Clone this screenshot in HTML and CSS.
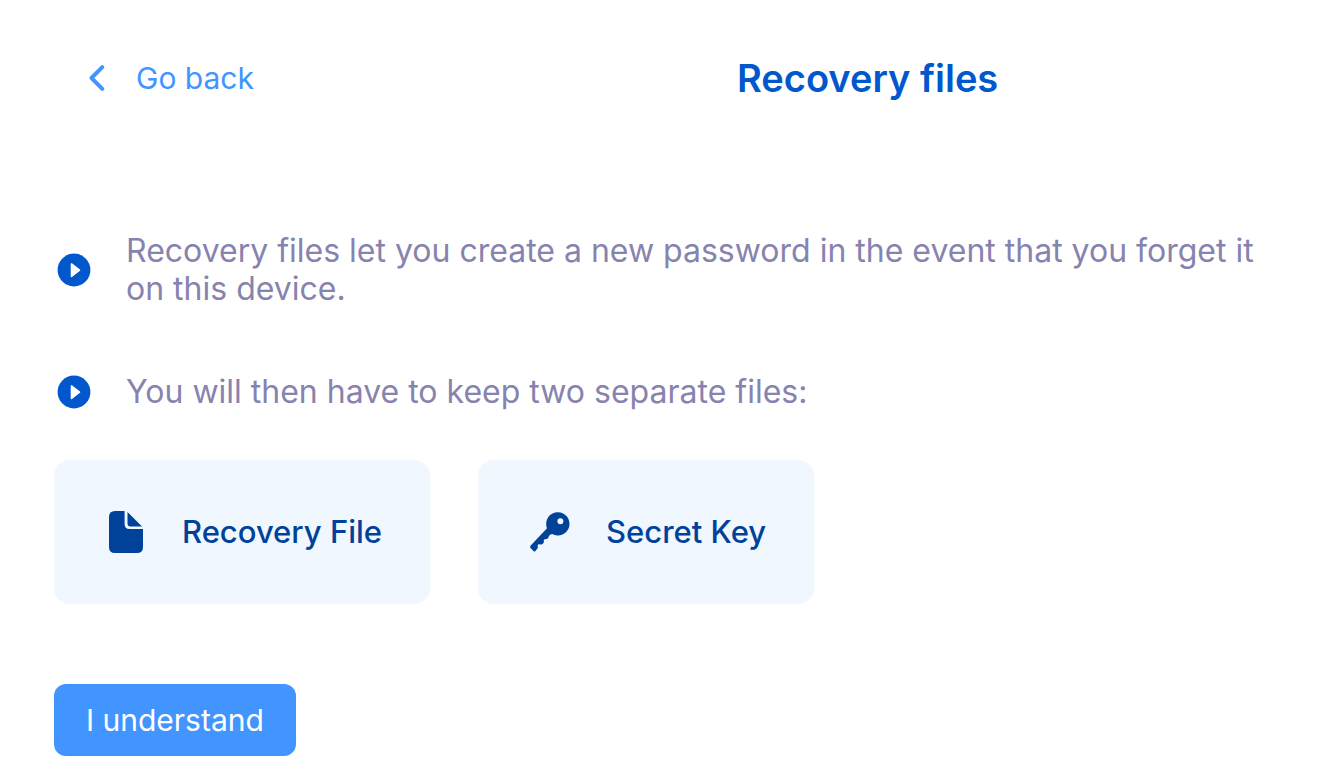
FILE: index.html
```html
<!DOCTYPE html>
<html lang="en">
<head>
<meta charset="utf-8">
<meta name="viewport" content="width=device-width, initial-scale=1">
<title>Recovery files</title>
<link rel="stylesheet" href="styles.css">
</head>
<body>
<main class="page">
  <header class="header">
    <button class="back" type="button">
      <svg class="back-icon" viewBox="0 0 18 28" aria-hidden="true"><path d="M14.300 3.200 3.500 14l10.800 10.800" fill="none" stroke="currentColor" stroke-width="4" stroke-linecap="round" stroke-linejoin="round"/></svg>
      <span>Go back</span>
    </button>
    <h1 class="title">Recovery files</h1>
  </header>
  <ul class="points">
    <li class="point">
      <svg class="point-icon" viewBox="0 0 40 40" aria-hidden="true"><circle cx="20" cy="20" r="16.4" fill="#0058cc"/><path d="M17.500 14v12.400l8-6.200z" fill="#fff" stroke="#fff" stroke-width="1.6" stroke-linejoin="round"/></svg>
      <p class="point-text">Recovery files let you create a new password in the event that you forget it on this device.</p>
    </li>
    <li class="point">
      <svg class="point-icon" viewBox="0 0 40 40" aria-hidden="true"><circle cx="20" cy="20" r="16.4" fill="#0058cc"/><path d="M17.500 14v12.400l8-6.200z" fill="#fff" stroke="#fff" stroke-width="1.6" stroke-linejoin="round"/></svg>
      <p class="point-text">You will then have to keep two separate files:</p>
    </li>
  </ul>
  <div class="cards">
    <div class="card">
      <svg class="card-icon" viewBox="0 0 48 48" aria-hidden="true"><path fill="currentColor" d="M13 3h9.600v13q0 5 5 5h13.400v18q0 6-6 6H13q-6 0-6-6V9q0-6 6-6z"/><path fill="currentColor" d="M25.500 4 40 18.400H28q-2.500 0-2.500-2.400z"/></svg>
      <span>Recovery File</span>
    </div>
    <div class="card">
      <svg class="card-icon" viewBox="0 0 48 48" aria-hidden="true"><path fill="currentColor" fill-rule="evenodd" d="M32 4.300a11.600 11.600 0 1 1-5.800 21.700q-2.600 0-3.500 2.600-.2 2-1.700 2.400-2.600-.4-3.200 1.300.6 2.200-.8 3.300-1 1.200-2.400.8-2.700-.5-3.100 1.100.8 1.500.2 2.500l-2 2.800q-1 1.300-2.200.2l-3-3q-1-1 0-2.300L21 20.300A11.600 11.600 0 0 1 32 4.300zm2.400 6a3 3 0 1 0 0 6 3 3 0 0 0 0-6z"/></svg>
      <span>Secret Key</span>
    </div>
  </div>
  <button class="confirm" type="button">I understand</button>
</main>
</body>
</html>
```
FILE: styles.css
```css
* {
  box-sizing: border-box;
}

body {
  margin: 0;
  background: #fff;
  color: #8783af;
  font-family: Inter, "Liberation Sans", sans-serif;
}

button {
  border: 0;
  font: inherit;
  cursor: pointer;
}

.page {
  padding: 48px 54px 28px;
}

.header {
  display: grid;
  grid-template-columns: 18fr 37fr;
  align-items: center;
  min-height: 60px;
}

.back {
  display: flex;
  align-items: center;
  justify-self: start;
  gap: 30px;
  padding: 0 34px;
  background: none;
  color: #4294ff;
  font-size: 30px;
  line-height: 36px;
}

.back-icon {
  width: 18px;
  height: 28px;
}

.title {
  margin: 0;
  color: #0058cc;
  font-size: 38px;
  font-weight: 600;
  line-height: 48px;
  text-align: center;
}

.points {
  display: grid;
  gap: 64px;
  margin: 124px 0 0;
  padding: 0;
  list-style: none;
}

.point {
  display: flex;
  align-items: center;
  gap: 32px;
}

.point-icon {
  flex: none;
  width: 40px;
  height: 40px;
}

.point-text {
  margin: 0;
  font-size: 32px;
  line-height: 38px;
}

.cards {
  display: flex;
  flex-wrap: wrap;
  gap: 48px;
  margin-top: 48px;
}

.card {
  display: flex;
  align-items: center;
  gap: 32px;
  padding: 48px;
  border-radius: 16px;
  background: #f0f7ff;
  color: #004299;
  font-size: 31px;
  font-weight: 500;
  line-height: 48px;
}

.card-icon {
  flex: none;
  width: 48px;
  height: 48px;
}

.confirm {
  display: block;
  margin-top: 80px;
  padding: 18px 32px;
  border-radius: 12px;
  background: #4294ff;
  color: #fff;
  font-size: 30px;
  line-height: 36px;
}
```
